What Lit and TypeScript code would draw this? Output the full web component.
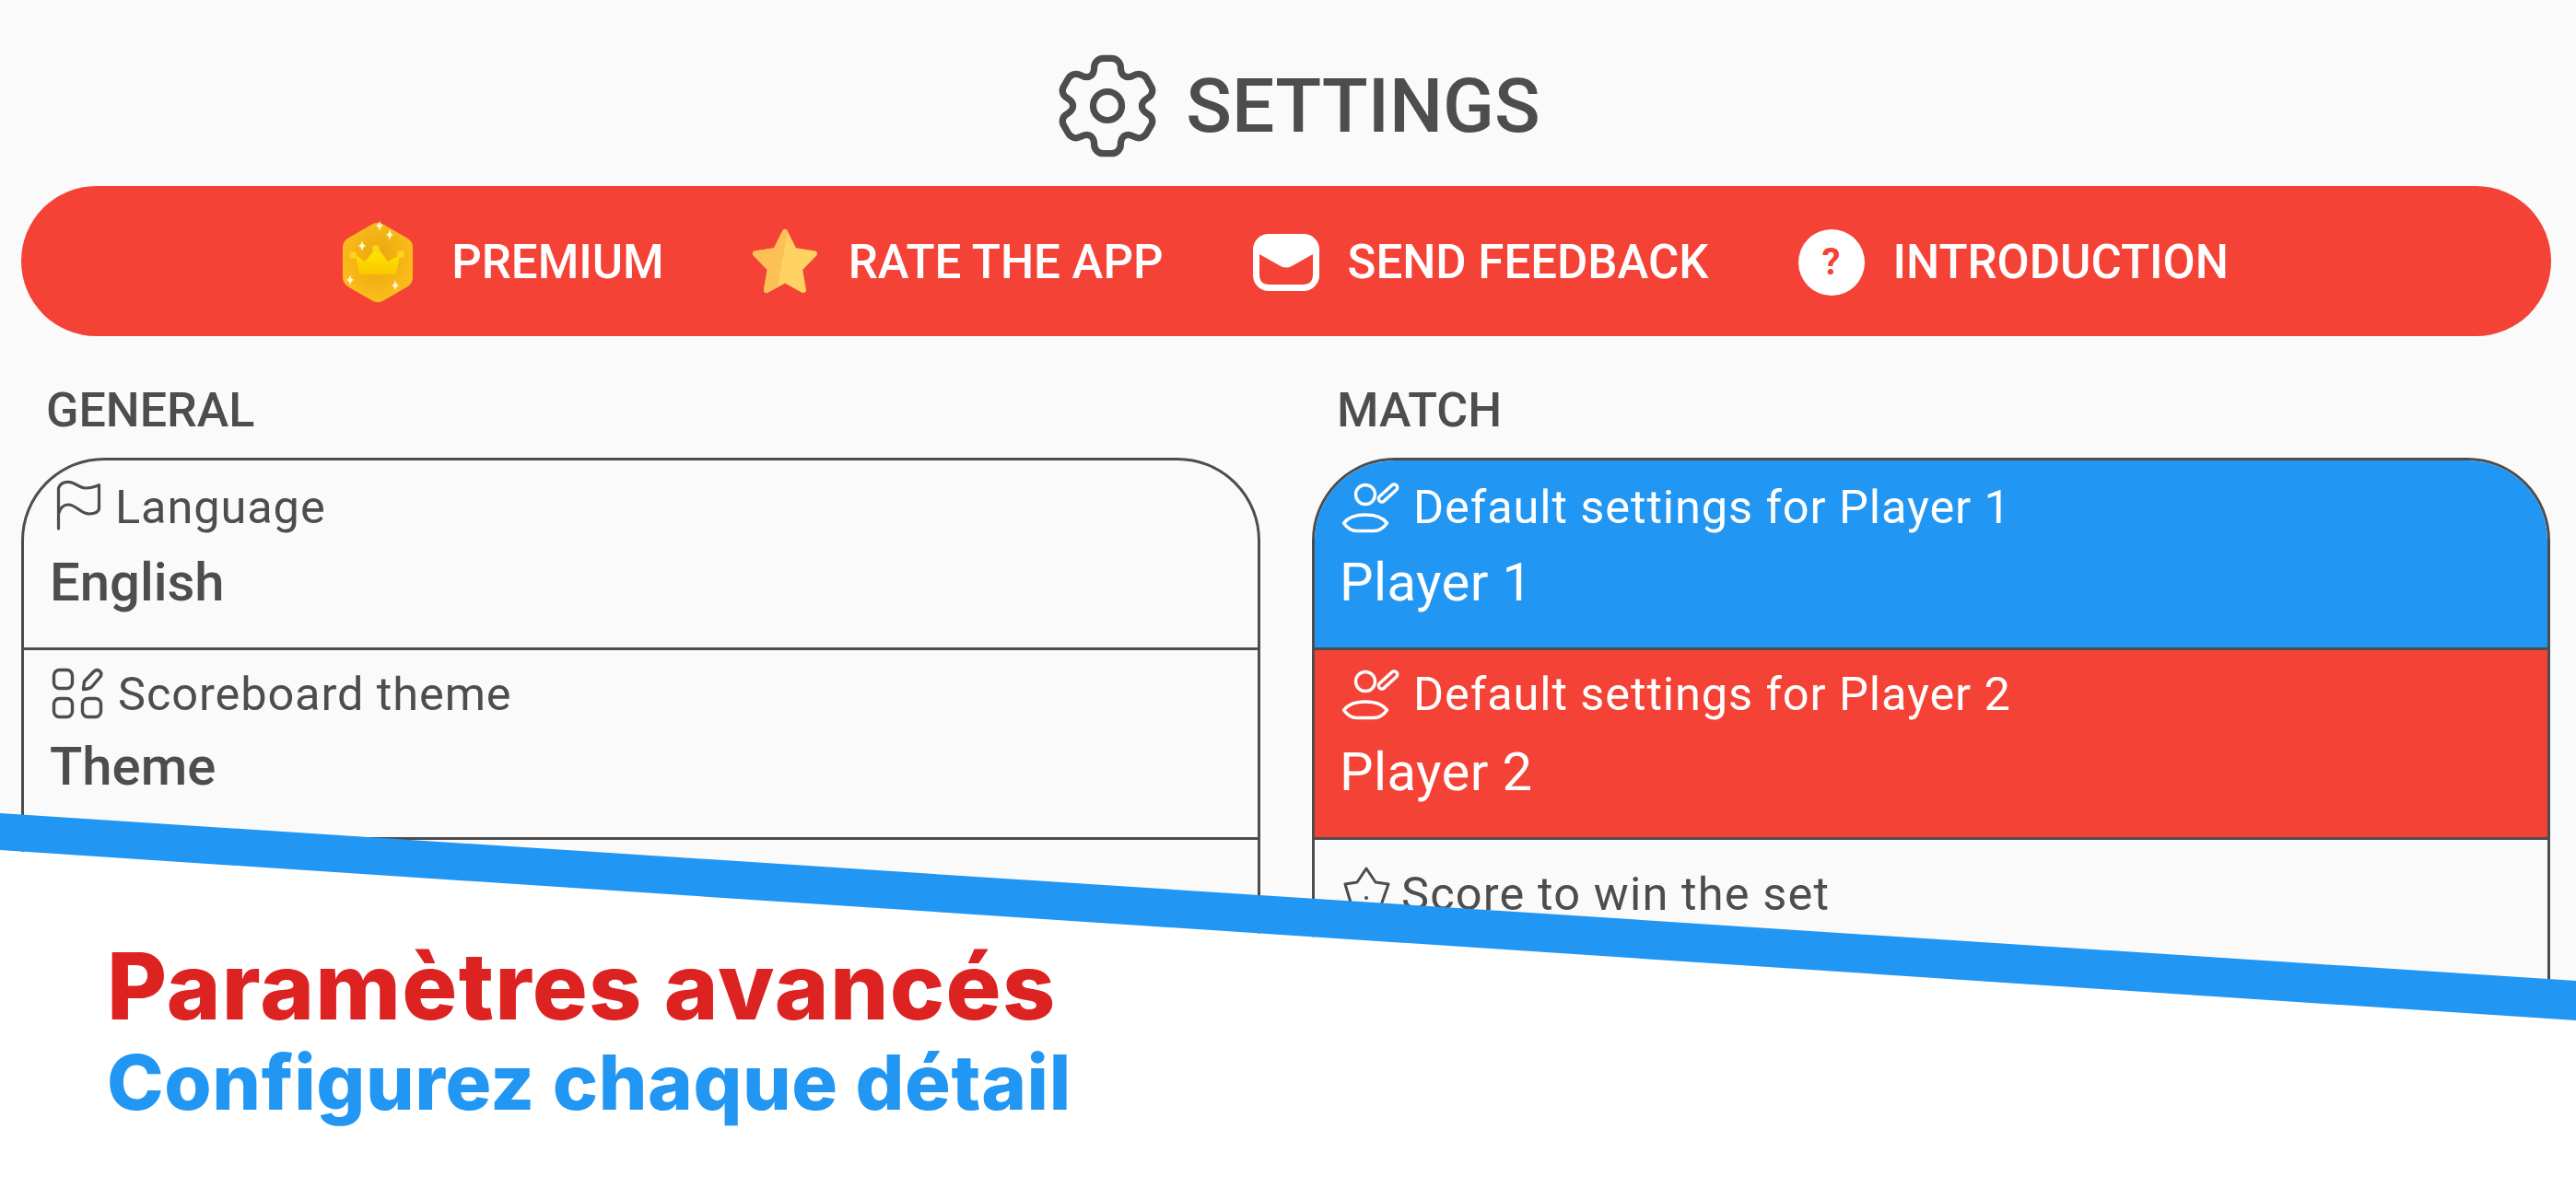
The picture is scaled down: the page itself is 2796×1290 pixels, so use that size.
import { LitElement, css, html, svg } from 'lit';
import { customElement } from 'lit/decorators.js';

const gear = svg`<g transform="rotate(90 12 12)" fill="none" stroke="currentColor" stroke-width="1.4" stroke-linecap="round" stroke-linejoin="round">
  <path d="M12 15a3 3 0 1 0 0-6 3 3 0 0 0 0 6Z"/>
  <path d="M2 12.88v-1.76c0-1.04.85-1.9 1.9-1.9 1.81 0 2.55-1.28 1.64-2.85-.52-.9-.21-2.07.7-2.59l1.73-.99c.79-.47 1.81-.19 2.28.6l.11.19c.9 1.57 2.38 1.57 3.29 0l.11-.19c.47-.79 1.49-1.07 2.28-.6l1.73.99c.91.52 1.22 1.69.7 2.59-.91 1.57-.17 2.85 1.64 2.85 1.04 0 1.9.85 1.9 1.9v1.76c0 1.04-.85 1.9-1.9 1.9-1.81 0-2.55 1.28-1.64 2.85.52.91.21 2.07-.7 2.59l-1.73.99c-.79.47-1.81.19-2.28-.6l-.11-.19c-.9-1.57-2.38-1.57-3.29 0l-.11.19c-.47.79-1.49 1.07-2.28.6l-1.73-.99a1.9 1.9 0 0 1-.7-2.59c.91-1.57.17-2.85-1.64-2.85-1.05 0-1.9-.86-1.9-1.9Z"/>
</g>`;

const sparkle = (x: number, y: number, r: number) =>
  svg`<path d="M${x} ${y - r}Q${x + r * 0.12} ${y - r * 0.12} ${x + r * 0.7} ${y}Q${x + r * 0.12} ${y + r * 0.12} ${x} ${y + r}Q${x - r * 0.12} ${y + r * 0.12} ${x - r * 0.7} ${y}Q${x - r * 0.12} ${y - r * 0.12} ${x} ${y - r}Z" fill="#fff8d0"/>`;

@customElement('app-root')
export class AppRoot extends LitElement {
  static styles = css`
    :host {
      background: #fafafa;
      color: #4d4d4d;
      display: block;
      font-family: Roboto, sans-serif;
      height: 1290px;
      overflow: hidden;
      position: relative;
      width: 2796px;
    }

    .title {
      align-items: center;
      box-sizing: border-box;
      display: flex;
      gap: 23px;
      height: 202px;
      justify-content: center;
      padding: 27px 0 0 16px;
    }

    .title svg {
      height: 124px;
      width: 124px;
    }

    .title h1 {
      font-size: 82px;
      font-weight: 500;
      margin: 0;
    }

    .bar {
      align-items: center;
      background: #f44336;
      border-radius: 82px;
      box-sizing: border-box;
      color: #fff;
      display: flex;
      font-size: 51px;
      font-weight: 500;
      gap: 97px;
      height: 163px;
      justify-content: center;
      margin: 0 27px 0 23px;
      padding: 2px 4px 0 0;
    }

    .action {
      align-items: center;
      display: flex;
      gap: 31px;
    }

    .action.wide {
      gap: 39px;
    }

    .action.pulled {
      margin-left: -4px;
    }

    .columns {
      display: grid;
      gap: 56px;
      grid-template-columns: 1345px 1344px;
      padding: 0 28px 0 23px;
    }

    h2 {
      font-size: 52px;
      font-weight: 500;
      line-height: 54px;
      margin: 0;
      padding: 54px 27px 24px;
    }

    .card {
      border: 3px solid #4d4d4d;
      border-radius: 90px;
      box-sizing: border-box;
      height: 900px;
      overflow: hidden;
    }

    .row {
      border-top: 3px solid #4d4d4d;
      box-sizing: border-box;
      height: 206px;
      padding: 14px 28px 0;
    }

    .row:first-child {
      border-top: none;
      height: 203px;
      padding-top: 17px;
    }

    .row:last-child {
      padding-top: 25px;
    }

    .row.blue {
      background: #2196f3;
      color: #fff;
    }

    .row.red {
      background: #f44336;
      color: #fff;
    }

    .label {
      align-items: center;
      display: flex;
      font-size: 50.5px;
      height: 66px;
      letter-spacing: 0.9px;
    }

    .label.loose {
      letter-spacing: 1.15px;
    }

    .label svg {
      flex: none;
      height: 66px;
    }

    .value {
      font-size: 58px;
      font-weight: 500;
      line-height: 70px;
      margin-top: 14px;
    }

    .value.near {
      margin-top: 11px;
    }

    .value.far {
      margin-top: 17px;
    }

    .blue .value,
    .red .value {
      font-weight: 400;
      letter-spacing: 0.4px;
      margin-left: -1px;
    }

    .overlay {
      height: 100%;
      left: 0;
      position: absolute;
      top: 0;
      width: 100%;
    }

    .promo {
      bottom: 0;
      left: 0;
      padding: 0 0 70px 116px;
      position: absolute;
    }

    .promo div {
      font-family: Inter, sans-serif;
      font-weight: 800;
    }

    .promo .main {
      color: #dd2222;
      font-size: 100px;
      letter-spacing: 1.3px;
      line-height: 118px;
    }

    .promo .sub {
      color: #2196f3;
      font-size: 83px;
      letter-spacing: 0.6px;
      line-height: 90px;
    }

    .help {
      align-items: center;
      background: #fff;
      border-radius: 50%;
      color: #f44336;
      display: flex;
      font-size: 40px;
      font-weight: 700;
      height: 72px;
      justify-content: center;
      width: 72px;
    }
  `;

  private premiumIcon() {
    return html`<svg width="82" height="90" viewBox="0 0 82 90">
      <defs>
        <radialGradient id="hx" cx="50%" cy="45%" r="55%">
          <stop offset="0" stop-color="#e8a50c"/>
          <stop offset="1" stop-color="#fdbd1c"/>
        </radialGradient>
        <linearGradient id="cr" x1="0" y1="0" x2="0" y2="1">
          <stop offset="0" stop-color="#ffe600"/>
          <stop offset="1" stop-color="#f9c800"/>
        </linearGradient>
      </defs>
      <path d="M35 3.5a12 12 0 0 1 12 0L73 18.5a12 12 0 0 1 6 10.4V61a12 12 0 0 1-6 10.4L47 86.5a12 12 0 0 1-12 0L9 71.4A12 12 0 0 1 3 61V28.9a12 12 0 0 1 6-10.4Z" fill="url(#hx)"/>
      <path d="M17 37L27 44L37 32Q40 30 43 32L52 44L65 37L61 58H21Z" fill="url(#cr)"/>
      <circle cx="14" cy="37" r="4" fill="#ffd21a"/>
      <circle cx="39" cy="30" r="4" fill="#ffd21a"/>
      <circle cx="66" cy="36" r="4" fill="#ffd21a"/>
      ${sparkle(43, 5, 6)}${sparkle(54, 15, 6)}${sparkle(24, 27, 6)}${sparkle(11, 64, 6)}${sparkle(60, 70, 6)}
    </svg>`;
  }

  private starIcon() {
    return html`<svg width="76" height="76" viewBox="0 0 76 76">
      <path d="M38 5L48 25L70 28.5L54 45L58 68L38 57L18 68L22 45L6 28.5L28 25Z" fill="#ffd264" stroke="#ffd264" stroke-width="6" stroke-linejoin="round"/>
      <path d="M38 5L28 25L6 28.5L22 45L18 68L27 63Z" fill="#fdc055" stroke="#fdc055" stroke-width="6" stroke-linejoin="round"/>
    </svg>`;
  }

  private mailIcon() {
    return html`<svg width="72" height="62" viewBox="0 0 72 62">
      <rect x="0" y="0" width="72" height="62" rx="17" fill="#fff"/>
      <path d="M7 22L30 35Q36 38 42 35L65 22V44Q65 55 54 55H18Q7 55 7 44Z" fill="#f44336"/>
    </svg>`;
  }

  private flagIcon() {
    return html`<svg width="71" viewBox="0 0 71 66" fill="none" stroke="currentColor" stroke-width="3.2" stroke-linecap="round" stroke-linejoin="round">
      <path d="M9.5 57V13C11 8 15 6.3 20 6.3C28 6.3 31 13 39 13C44 13 49 12 53.5 9.7V35C53.5 38 50 41 43 41C33 41 29 31 20 31C15 31 11 35 9.5 41"/>
    </svg>`;
  }

  private themeIcon() {
    return html`<svg width="74" viewBox="0 0 74 66" fill="none" stroke="currentColor" stroke-width="3.4" stroke-linejoin="round">
      <rect x="4.5" y="7.5" width="20" height="20" rx="6"/>
      <rect x="4.5" y="38.5" width="20" height="20" rx="6"/>
      <rect x="35.5" y="38.5" width="20" height="20" rx="6"/>
      <path d="M36.5 28.5L37.5 20L47.5 9.5Q51.5 6 54.5 9Q57.5 12 54 16L45 26.5Q41 28.5 36.5 28.5Z"/>
    </svg>`;
  }

  private playerIcon() {
    return html`<svg width="79" viewBox="0 0 79 66" fill="none" stroke="currentColor" stroke-width="3.4" stroke-linejoin="round">
      <circle cx="27" cy="20" r="10.5"/>
      <path d="M3.5 51C8 45 17 42 27 42S46 45 50.5 51C47 56 42 59.5 36 59.5H18C12 59.5 7 56 3.5 51Z"/>
      <rect x="48" y="6" width="7" height="25" rx="3.5" transform="rotate(48 51.5 18.5)"/>
    </svg>`;
  }

  private scoreIcon() {
    return html`<svg width="66" viewBox="0 0 66 66" fill="none" stroke="currentColor" stroke-width="3" stroke-linejoin="round">
      <path d="M28 6L38 21L52 23L45 43Q43 56 36 56H20Q13 56 11 43L5 23L18 21Z"/>
      <circle cx="28" cy="38" r="2" fill="currentColor" stroke="none"/>
    </svg>`;
  }

  render() {
    return html`
      <header class="title">
        <svg viewBox="0 0 24 24">${gear}</svg>
        <h1>SETTINGS</h1>
      </header>
      <nav class="bar">
        <div class="action wide">${this.premiumIcon()}<span>PREMIUM</span></div>
        <div class="action pulled">${this.starIcon()}<span>RATE THE APP</span></div>
        <div class="action">${this.mailIcon()}<span>SEND FEEDBACK</span></div>
        <div class="action"><div class="help">?</div><span>INTRODUCTION</span></div>
      </nav>
      <div class="columns">
        <section>
          <h2>GENERAL</h2>
          <div class="card">
            <div class="row">
              <div class="label">${this.flagIcon()}<span>Language</span></div>
              <div class="value">English</div>
            </div>
            <div class="row">
              <div class="label">${this.themeIcon()}<span>Scoreboard theme</span></div>
              <div class="value near">Theme</div>
            </div>
            <div class="row"></div>
          </div>
        </section>
        <section>
          <h2>MATCH</h2>
          <div class="card">
            <div class="row blue">
              <div class="label">${this.playerIcon()}<span>Default settings for Player 1</span></div>
              <div class="value">Player 1</div>
            </div>
            <div class="row red">
              <div class="label">${this.playerIcon()}<span>Default settings for Player 2</span></div>
              <div class="value far">Player 2</div>
            </div>
            <div class="row">
              <div class="label loose">${this.scoreIcon()}<span>Score to win the set</span></div>
            </div>
          </div>
        </section>
      </div>
      <svg class="overlay" viewBox="0 0 2796 1290">
        <polygon points="0,923 2796,1108 2796,1290 0,1290" fill="#fff"/>
        <polygon points="0,883 2796,1065 2796,1108 0,923" fill="#2196f3"/>
      </svg>
      <div class="promo">
        <div class="main">Paramètres avancés</div>
        <div class="sub">Configurez chaque détail</div>
      </div>
    `;
  }
}
